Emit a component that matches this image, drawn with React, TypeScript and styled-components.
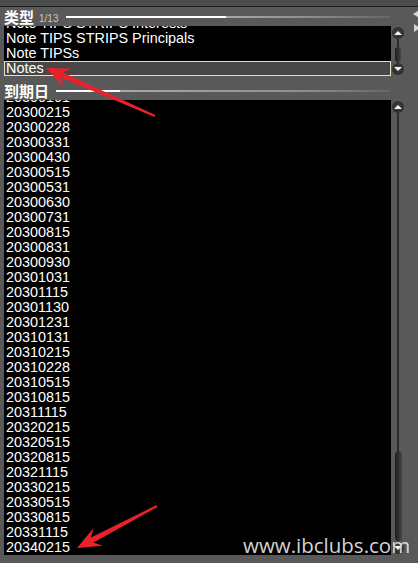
import React, { useLayoutEffect, useRef } from "react";
import styled, { createGlobalStyle, css } from "styled-components";

const Global = createGlobalStyle`
  html, body { margin: 0; padding: 0; background: #595959; }
  body { font-family: "Liberation Sans", Arial, sans-serif; }
`;

const Page = styled.div`
  position: relative;
  width: 418px;
  height: 563px;
  overflow: hidden;
  background: #595959;
  display: flex;
  flex-direction: column;
`;

const TopStrip = styled.div`
  flex: none;
  height: 6px;
  background: #4b4b4b;
  border-bottom: 1px solid #1c1c1c;
`;

const Header = styled.div<{ $h: number; $pt?: number }>`
  flex: none;
  box-sizing: border-box;
  height: ${(p) => p.$h}px;
  padding-top: ${(p) => p.$pt ?? 0}px;
  width: 390px;
  padding-left: 4px;
  display: flex;
  align-items: center;
`;

const Title = styled.span`
  font-family: "Noto Sans CJK SC", "Noto Sans", sans-serif;
  font-weight: 700;
  font-size: 15px;
  line-height: 18px;
  color: #ffffff;
  white-space: nowrap;
`;

const Count = styled.span`
  font-family: "Liberation Sans", Arial, sans-serif;
  font-size: 10px;
  color: #c6c6c6;
  margin-left: 5px;
  margin-top: 3px;
`;

const Rule = styled.div<{ $white: number; $ml: number }>`
  flex: 1;
  height: 2px;
  margin-left: ${(p) => p.$ml}px;
  background: linear-gradient(
    to right,
    #ffffff 0,
    #ffffff ${(p) => p.$white}px,
    #a8a8a8 ${(p) => p.$white}px,
    #8e8e8e 75%,
    rgba(110, 110, 110, 0.6) 100%
  );
`;

const ListRow = styled.div<{ $h: number }>`
  flex: none;
  height: ${(p) => p.$h}px;
  display: flex;
`;

const ListBox = styled.div`
  width: 387px;
  margin-left: 4px;
  height: 100%;
  background: #000;
  overflow: hidden;
`;

const Item = styled.div<{ $sel?: boolean }>`
  box-sizing: border-box;
  height: 15px;
  line-height: 15px;
  padding-left: 2px;
  font-family: "Liberation Sans", Arial, sans-serif;
  font-size: 14.4px;
  color: #ffffff;
  white-space: nowrap;
  ${(p) =>
    p.$sel &&
    css`
      background: #474747;
      border: 1px solid #e4e4b2;
      padding-left: 1px;
      line-height: 13px;
    `}
`;

const ScrollCol = styled.div`
  width: 12px;
  margin-left: 1px;
  display: flex;
  flex-direction: column;
  align-items: center;
`;

const Btn = styled.div<{ $m: string }>`
  flex: none;
  width: 12px;
  height: 12px;
  margin: ${(p) => p.$m};
  border-radius: 50%;
  background: radial-gradient(circle at 50% 45%, #3c3c3c 0, #323232 55%, #262626 100%);
  display: flex;
  align-items: center;
  justify-content: center;
`;

const Tri = styled.span<{ $down?: boolean }>`
  width: 0;
  height: 0;
  border-left: 4px solid transparent;
  border-right: 4px solid transparent;
  ${(p) =>
    p.$down
      ? css`border-top: 4px solid #f2f2f2;`
      : css`border-bottom: 4px solid #f2f2f2;`}
`;

const TrackLine = styled.div<{ $h?: number }>`
  width: 2px;
  background: #2c2c2c;
  ${(p) => (p.$h !== undefined ? css`height: ${p.$h}px; flex: none;` : css`flex: 1;`)}
`;

const Thumb = styled.div<{ $h: number; $w: number }>`
  flex: none;
  width: ${(p) => p.$w}px;
  height: ${(p) => p.$h}px;
  border-radius: ${(p) => p.$w / 2}px;
  background: linear-gradient(to right, #1f1f1f 0, #2e2e2e 45%, #464646 100%);
`;

const EdgeArrow = styled.span<{ $top: number; $dir: "left" | "right" }>`
  position: absolute;
  top: ${(p) => p.$top}px;
  left: ${(p) => (p.$dir === "left" ? 413 : 414)}px;
  width: 0;
  height: 0;
  border-top: 4px solid transparent;
  border-bottom: 4px solid transparent;
  ${(p) =>
    p.$dir === "left"
      ? css`border-right: 6px solid #d4d4d4;`
      : css`border-left: 6px solid #d4d4d4;`}
`;

const Watermark = styled.div`
  position: absolute;
  left: 243px;
  top: 534px;
  font-family: "Open Sans", "Noto Sans", sans-serif;
  font-size: 20.5px;
  line-height: 22px;
  color: rgba(232, 232, 232, 0.92);
  white-space: nowrap;
  pointer-events: none;
`;

const Overlay = styled.svg`
  position: absolute;
  left: 0;
  top: 0;
  pointer-events: none;
`;

const types = [
  "Bills",
  "Bond STRIPS Interests",
  "Bond STRIPS Principals",
  "Bond TIPS STRIPS Interests",
  "Bond TIPS STRIPS Principals",
  "Bond TIPSs",
  "Bonds",
  "FRNs",
  "Note STRIPS Interests",
  "Note TIPS STRIPS Interests",
  "Note TIPS STRIPS Principals",
  "Note TIPSs",
  "Notes",
];

const dates = [
  "20290815",
  "20291115",
  "20291231",
  "20300101",
  "20300215",
  "20300228",
  "20300331",
  "20300430",
  "20300515",
  "20300531",
  "20300630",
  "20300731",
  "20300815",
  "20300831",
  "20300930",
  "20301031",
  "20301115",
  "20301130",
  "20301231",
  "20310131",
  "20310215",
  "20310228",
  "20310515",
  "20310815",
  "20311115",
  "20320215",
  "20320515",
  "20320815",
  "20321115",
  "20330215",
  "20330515",
  "20330815",
  "20331115",
  "20340215",
];

function arrowPoints(
  tx: number,
  ty: number,
  px: number,
  py: number,
  headLen: number,
  headHalf: number,
  neckHalf: number,
  tailHalf: number
) {
  const dx = px - tx;
  const dy = py - ty;
  const L = Math.hypot(dx, dy);
  const ux = dx / L;
  const uy = dy / L;
  const nx = -uy;
  const ny = ux;
  const bx = px - ux * headLen;
  const by = py - uy * headLen;
  const kx = px - ux * headLen * 0.72;
  const ky = py - uy * headLen * 0.72;
  const pts = [
    [tx + nx * tailHalf, ty + ny * tailHalf],
    [kx + nx * neckHalf, ky + ny * neckHalf],
    [bx + nx * headHalf, by + ny * headHalf],
    [px, py],
    [bx - nx * headHalf, by - ny * headHalf],
    [kx - nx * neckHalf, ky - ny * neckHalf],
    [tx - nx * tailHalf, ty - ny * tailHalf],
  ];
  return pts.map((p) => `${p[0].toFixed(1)},${p[1].toFixed(1)}`).join(" ");
}

function ScrollList({
  items,
  selected,
  height,
  children,
}: {
  items: string[];
  selected?: number;
  height: number;
  children: React.ReactNode;
}) {
  const ref = useRef<HTMLDivElement>(null);
  useLayoutEffect(() => {
    if (ref.current) ref.current.scrollTop = ref.current.scrollHeight;
  }, []);
  return (
    <ListRow $h={height}>
      <ListBox ref={ref}>
        {items.map((t, i) => (
          <Item key={t + i} $sel={i === selected}>
            {t}
          </Item>
        ))}
      </ListBox>
      {children}
    </ListRow>
  );
}

export default function App() {
  return (
    <>
      <Global />
      <Page>
        <TopStrip />
        <Header $h={19}>
          <Title>类型</Title>
          <Count>1/13</Count>
          <Rule $white={160} $ml={8} />
        </Header>
        <ScrollList items={types} selected={types.length - 1} height={50}>
          <ScrollCol>
            <Btn $m="1px 0 0 0">
              <Tri />
            </Btn>
            <TrackLine $h={8} />
            <Thumb $w={6} $h={15} />
            <TrackLine />
            <Btn $m="0 0 1px 0">
              <Tri $down />
            </Btn>
          </ScrollCol>
        </ScrollList>
        <Header $h={24} $pt={6}>
          <Title>到期日</Title>
          <Rule $white={64} $ml={7} />
        </Header>
        <ScrollList items={dates} height={455}>
          <ScrollCol>
            <Btn $m="1px 0 0 0">
              <Tri />
            </Btn>
            <TrackLine />
            <Thumb $w={7} $h={90} />
            <TrackLine $h={1} />
            <Btn $m="0 0 1px 0">
              <Tri $down />
            </Btn>
          </ScrollCol>
        </ScrollList>
        <EdgeArrow $top={10} $dir="left" />
        <EdgeArrow $top={24} $dir="right" />
        <Watermark>www.ibclubs.com</Watermark>
        <Overlay width={418} height={563} viewBox="0 0 418 563">
          <polygon
            points={arrowPoints(155, 116, 46, 68, 24, 10, 2.8, 1)}
            fill="#e8222b"
          />
          <polygon
            points={arrowPoints(157, 506, 77, 548, 24, 10, 2.8, 1)}
            fill="#e8222b"
          />
        </Overlay>
      </Page>
    </>
  );
}
